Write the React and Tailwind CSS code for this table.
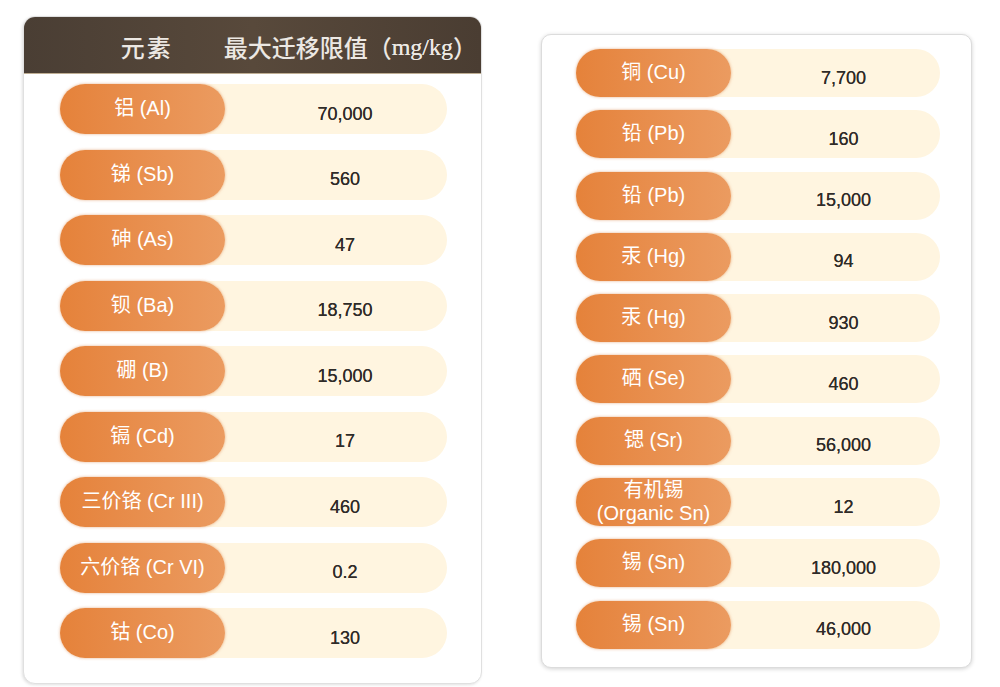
import React from "react";

const leftRows = [
  ["铝 (Al)", "70,000"],
  ["锑 (Sb)", "560"],
  ["砷 (As)", "47"],
  ["钡 (Ba)", "18,750"],
  ["硼 (B)", "15,000"],
  ["镉 (Cd)", "17"],
  ["三价铬 (Cr III)", "460"],
  ["六价铬 (Cr VI)", "0.2"],
  ["钴 (Co)", "130"],
];

const rightRows = [
  ["铜 (Cu)", "7,700"],
  ["铅 (Pb)", "160"],
  ["铅 (Pb)", "15,000"],
  ["汞 (Hg)", "94"],
  ["汞 (Hg)", "930"],
  ["硒 (Se)", "460"],
  ["锶 (Sr)", "56,000"],
  [["有机锡", "(Organic Sn)"], "12"],
  ["锡 (Sn)", "180,000"],
  ["锡 (Sn)", "46,000"],
];

const font = { fontFamily: '"Liberation Sans", "Noto Sans CJK SC", sans-serif' };

function Row({ name, value, left }) {
  const multi = Array.isArray(name);
  return (
    <div
      className={
        "flex items-stretch rounded-full bg-[#fff5e0] " +
        (left ? "h-[50px]" : "h-[48px]")
      }
    >
      <div
        className={
          "flex shrink-0 flex-col items-center justify-center rounded-full bg-gradient-to-r from-[#e5823a] to-[#eb9b60] text-white shadow-[0_0_3px_rgba(210,110,40,0.55)] " +
          (left ? "w-[165px]" : "w-[155px]") +
          (multi ? " text-[20px] leading-[23px]" : " text-[20px] leading-none pb-[2px]")
        }
      >
        {multi ? (
          <>
            <span>{name[0]}</span>
            <span>{name[1]}</span>
          </>
        ) : (
          <span>{name}</span>
        )}
      </div>
      <div
        className={
          "flex flex-1 items-center justify-center pt-[9px] text-[18px] leading-none text-[#2f2b28] [text-shadow:0_0_0.4px_#2f2b28] " +
          (left ? "pl-[18px]" : "pl-4")
        }
      >
        {value}
      </div>
    </div>
  );
}

export default function App() {
  return (
    <div className="flex h-[687px] w-[1000px] items-start bg-white pl-[23px] pt-[16px]" style={font}>
      <div className="w-[459px] overflow-hidden rounded-[12px] border border-[#e0e0e0] bg-white pb-[25px] shadow-[-1px_1px_3px_rgba(0,0,0,0.12)]">
        <div className="flex h-[57px] items-center border-b border-[#bfae93] bg-gradient-to-r from-[#4a3e34] via-[#58493b] to-[#4a3d32] pl-[46px] pr-[4px] pt-[4px] text-[24px] leading-none text-[#ece8e3]">
          <div className="w-[165px] text-center tracking-[2px] font-medium" style={{ fontFamily: '"Noto Sans CJK SC", sans-serif' }}>
            元素
          </div>
          <div className="flex flex-1 justify-center whitespace-nowrap font-medium" style={{ fontFamily: '"Noto Sans CJK SC", sans-serif' }}>
            最大迁移限值（<span className="font-normal [text-shadow:0_0_0.6px_#ece8e3]" style={{ fontFamily: '"Liberation Serif", serif' }}>mg/kg</span>）
          </div>
        </div>
        <div className="flex flex-col gap-[15.5px] pl-[36px] pr-[34px] pt-[10px]">
          {leftRows.map(([n, v], i) => (
            <Row key={i} name={n} value={v} left />
          ))}
        </div>
      </div>

      <div className="ml-[59px] mt-[18px] w-[431px] rounded-[10px] border border-[#dcdcdc] bg-white pb-[18px] pl-[34px] pr-[31px] pt-[14px] shadow-[0_1px_4px_rgba(0,0,0,0.18)]">
        <div className="flex flex-col gap-[13.3px]">
          {rightRows.map(([n, v], i) => (
            <Row key={i} name={n} value={v} />
          ))}
        </div>
      </div>
    </div>
  );
}
